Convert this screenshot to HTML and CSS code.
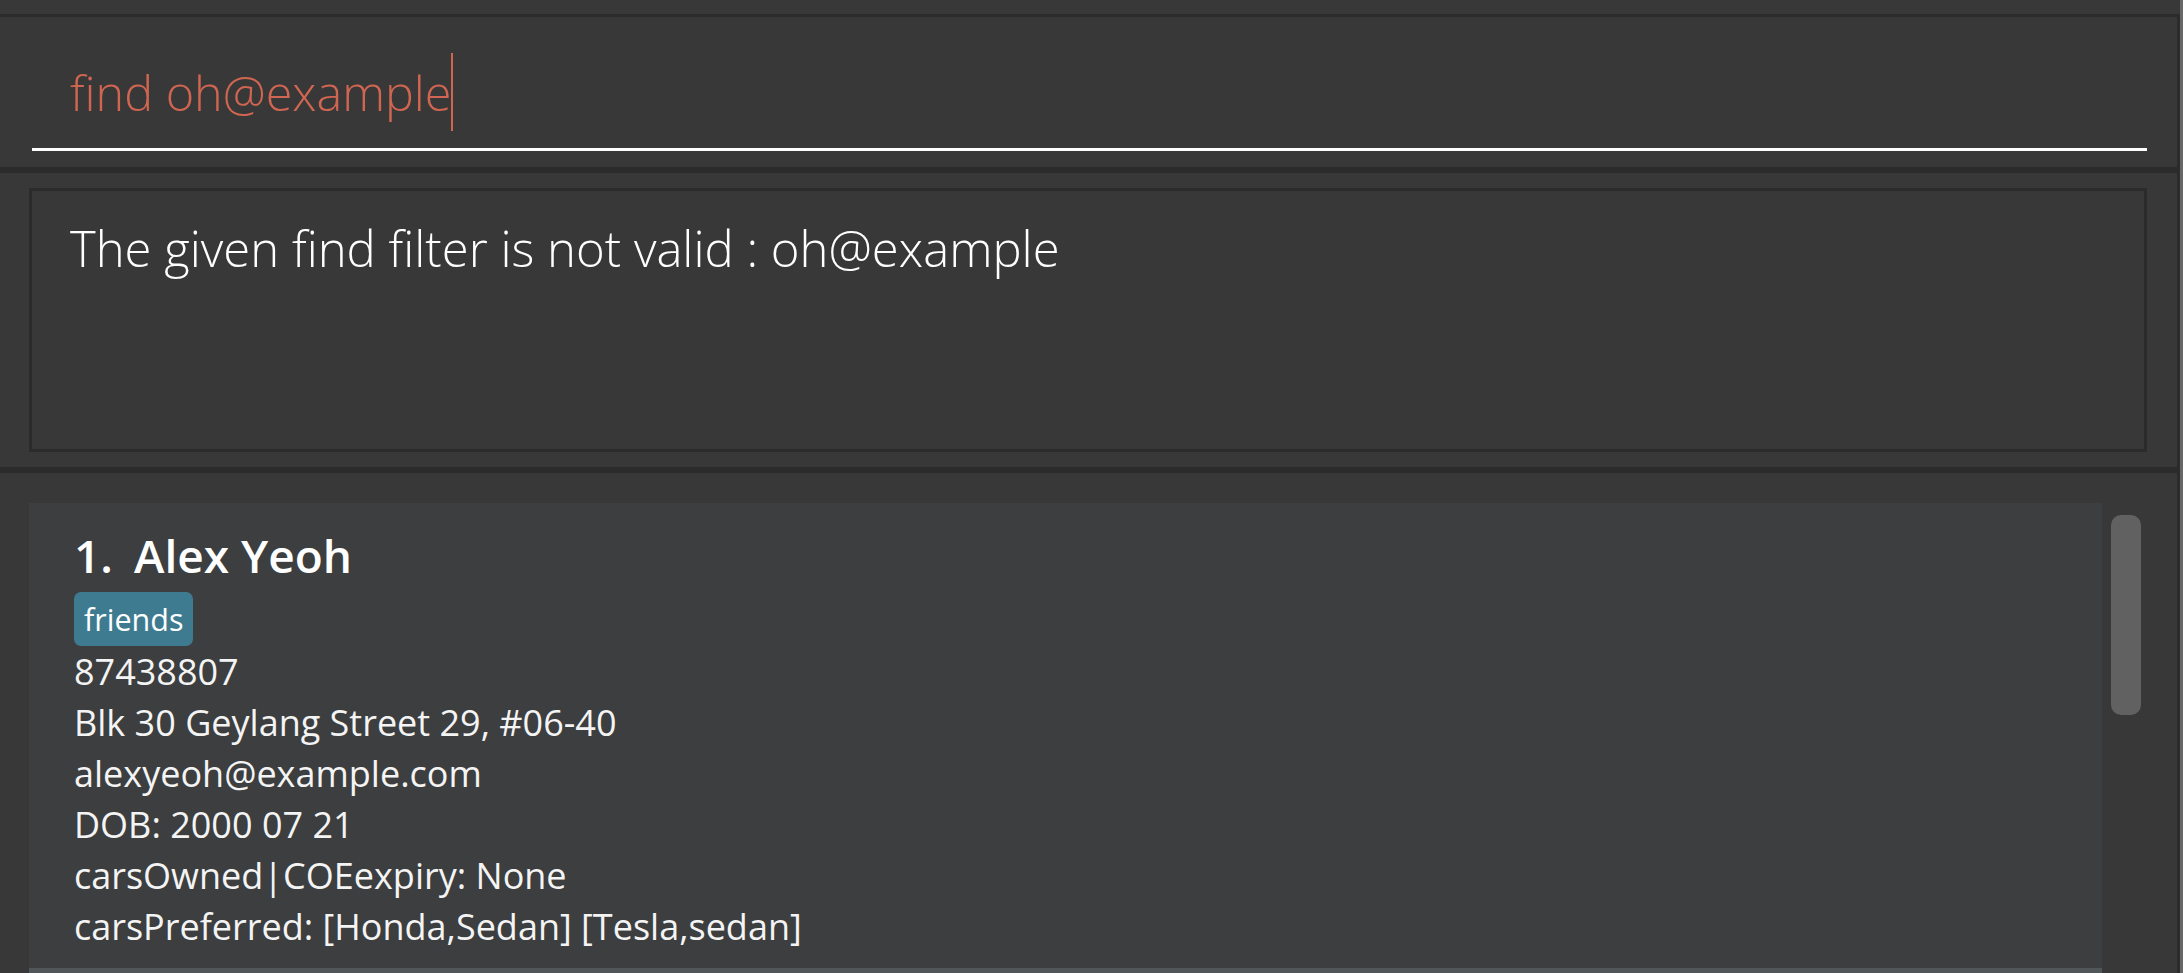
FILE: index.html
```html
<!DOCTYPE html>
<html lang="en">
<head>
<meta charset="utf-8">
<title>Address App</title>
<link rel="stylesheet" href="styles.css">
</head>
<body>
<div class="app">
  <div class="main">
    <div class="topbar"></div>
    <div class="frame">
      <div class="command-pane">
        <div class="command-field">
          <span class="command-text">find oh@example</span><span class="caret"></span>
        </div>
        <div class="command-underline"></div>
      </div>
      <div class="divider"></div>
      <div class="result-pane">
        <div class="result-box">
          <div class="result-text">The given find filter is not valid : oh@example</div>
        </div>
      </div>
      <div class="divider"></div>
      <div class="list-pane">
        <div class="cells">
          <div class="cell cell-even">
            <div class="name-row"><span class="cell-id">1.</span><span class="cell-name">Alex Yeoh</span></div>
            <div class="tags"><span class="tag">friends</span></div>
            <div class="detail">87438807</div>
            <div class="detail">Blk 30 Geylang Street 29, #06-40</div>
            <div class="detail">alexyeoh@example.com</div>
            <div class="detail">DOB: 2000 07 21</div>
            <div class="detail">carsOwned|COEexpiry: None</div>
            <div class="detail">carsPreferred: [Honda,Sedan] [Tesla,sedan]</div>
          </div>
          <div class="cell cell-odd"></div>
        </div>
        <div class="scroll-track">
          <div class="scroll-thumb"></div>
        </div>
      </div>
    </div>
  </div>
  <div class="edge"></div>
</div>
</body>
</html>
```

FILE: styles.css
```css
html, body {
  margin: 0;
  padding: 0;
  background: #383838;
  overflow: hidden;
}

.app {
  display: flex;
  width: 2183px;
  height: 973px;
  overflow: hidden;
}

.main {
  width: 2180px;
  flex-shrink: 0;
  display: flex;
  flex-direction: column;
  overflow: hidden;
}

.edge {
  width: 3px;
  flex-shrink: 0;
  background: #676767;
}

.topbar {
  height: 14px;
  flex-shrink: 0;
  background: #383838;
}

.frame {
  border-top: 3px solid #2b2b2b;
  border-right: 3px solid #2b2b2b;
  display: flex;
  flex-direction: column;
  flex: 1 1 auto;
  min-height: 0;
  overflow: hidden;
}

.command-pane {
  height: 150px;
  flex-shrink: 0;
  box-sizing: border-box;
  padding: 36px 30px 0 32px;
  background: #383838;
}

.command-field {
  height: 78px;
  padding-left: 38px;
  display: flex;
  align-items: flex-start;
  font-family: "Open Sans", "Segoe UI", sans-serif;
  font-weight: 300;
  font-size: 48.5px;
  line-height: 78px;
  color: #d06651;
  white-space: nowrap;
}

.caret {
  display: inline-block;
  width: 2px;
  height: 78px;
  margin-left: 0;
  background: #d06651;
}

.command-underline {
  margin-top: 17px;
  height: 3px;
  background: #ffffff;
}

.divider {
  height: 6px;
  flex-shrink: 0;
  background: #2b2b2b;
}

.result-pane {
  height: 294px;
  flex-shrink: 0;
  box-sizing: border-box;
  padding: 15px 30px 15px 29px;
  background: #383838;
}

.result-box {
  height: 100%;
  box-sizing: border-box;
  border: 3px solid #2b2b2b;
  padding: 24px 38px 0 38px;
}

.result-text {
  font-family: "Open Sans", "Segoe UI", sans-serif;
  font-weight: 300;
  font-size: 49px;
  line-height: 66px;
  color: #ffffff;
  white-space: nowrap;
}

.list-pane {
  flex: 1 1 auto;
  min-height: 0;
  display: flex;
  background: #383838;
  overflow: hidden;
}

.cells {
  width: 2073px;
  flex-shrink: 0;
  padding: 30px 0 0 29px;
  display: flex;
  flex-direction: column;
}

.cell {
  box-sizing: border-box;
  flex-shrink: 0;
}

.cell-even {
  height: 465px;
  background: #3c3e3f;
  padding: 22px 0 0 45px;
  color: #ffffff;
  font-family: "Open Sans", "Segoe UI", sans-serif;
}

.cell-odd {
  height: 200px;
  background: #515658;
}

.name-row {
  display: flex;
  font-size: 46px;
  font-weight: 600;
  line-height: 60px;
  white-space: nowrap;
}

.cell-id {
  width: 60px;
}

.tags {
  display: flex;
  margin-top: 7px;
}

.tag {
  height: 54px;
  line-height: 54px;
  padding: 0 10px;
  border-radius: 7px;
  background: #3e7b91;
  font-size: 30.5px;
  font-weight: 500;
  color: #ffffff;
}

.detail {
  font-size: 36px;
  line-height: 51px;
  white-space: nowrap;
  color: #f4f4f4;
}

.scroll-track {
  width: 75px;
  flex-shrink: 0;
  padding: 42px 0 0 9px;
  box-sizing: border-box;
}

.scroll-thumb {
  width: 30px;
  height: 200px;
  border-radius: 10px;
  background: #616161;
}
```
